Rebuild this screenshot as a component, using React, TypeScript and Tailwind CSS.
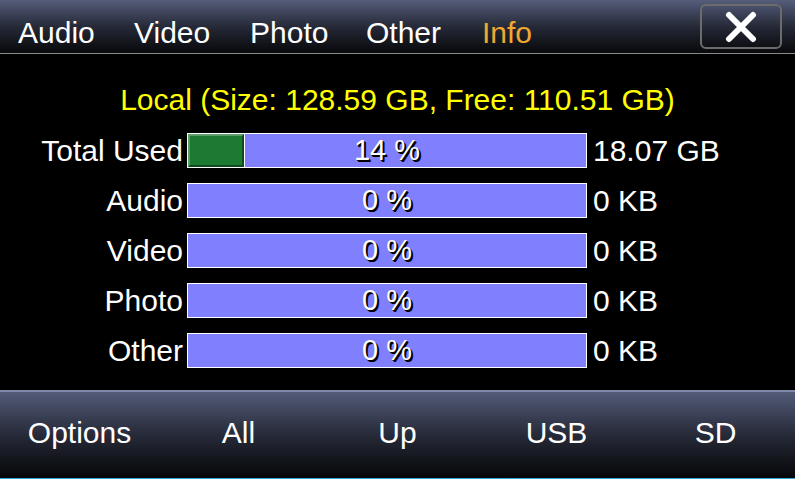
import * as React from 'react';

const tabs = ['Audio', 'Video', 'Photo', 'Other', 'Info'];

const rows = [
    { label: 'Total Used', pct: 14, value: '18.07 GB' },
    { label: 'Audio', pct: 0, value: '0 KB' },
    { label: 'Video', pct: 0, value: '0 KB' },
    { label: 'Photo', pct: 0, value: '0 KB' },
    { label: 'Other', pct: 0, value: '0 KB' },
];

const actions = ['Options', 'All', 'Up', 'USB', 'SD'];

function UsageBar({ pct }: { pct: number }) {
    return (
        <div className="relative flex h-[35px] w-[400px] border border-white bg-[#8080ff]">
            {pct > 0 && (
                <div
                    className="h-full border-2 border-t-[#5d9c6b] border-l-[#5d9c6b] border-b-[#0e4a1b] border-r-[#0e4a1b] bg-[#1d7a32] box-border"
                    style={{ width: `${Math.round((pct / 100) * 398)}px` }}
                />
            )}
            {pct > 0 && <div className="h-full w-px bg-white" />}
            <span className="absolute inset-0 flex items-center justify-center text-[29px] leading-none text-white [text-shadow:1px_1px_0_#000,2px_2px_0_#000]">
                {pct} %
            </span>
        </div>
    );
}

export default function App() {
    return (
        <div className="flex h-[479px] w-[795px] flex-col overflow-hidden bg-black text-[30px] text-white [font-family:'Liberation_Sans',Arial,sans-serif]">
            <div className="flex h-[54px] shrink-0 items-start border-b border-[#8a8a8a] bg-gradient-to-b from-[#555d7b] via-[#262a38] to-[#08090b]">
                <div className="flex pl-[18px] pt-[18px]">
                    {tabs.map((t) => (
                        <span
                            key={t}
                            className={`w-[116px] leading-none ${t === 'Info' ? 'text-[#f0a830]' : 'text-white'}`}
                        >
                            {t}
                        </span>
                    ))}
                </div>
                <button className="ml-auto mr-[13px] mt-[4px] flex h-[45px] w-[82px] items-center justify-center rounded-[6px] border-2 border-[#6b6b6b]">
                    <svg width="32" height="32" viewBox="0 0 32 32">
                        <path d="M4 4 L28 28 M28 4 L4 28" stroke="white" strokeWidth="6" strokeLinecap="round" fill="none" />
                    </svg>
                </button>
            </div>

            <div className="flex flex-1 flex-col pt-[31px]">
                <div className="text-center leading-none text-[#ffff00]">
                    Local (Size: 128.59 GB, Free: 110.51 GB)
                </div>
                <div className="mt-[18px] flex flex-col gap-[15px]">
                    {rows.map((r) => (
                        <div key={r.label} className="flex items-center">
                            <span className="w-[183px] text-right leading-none">{r.label}</span>
                            <div className="ml-[4px]">
                                <UsageBar pct={r.pct} />
                            </div>
                            <span className="ml-[6px] leading-none">{r.value}</span>
                        </div>
                    ))}
                </div>
            </div>

            <div className="flex h-[89px] shrink-0 flex-col border-t-2 border-[#8189ab] bg-gradient-to-b from-[#535b79] via-[#262a38] to-[#060708]">
                <div className="grid flex-1 grid-cols-5 items-center pb-[4px]">
                    {actions.map((a) => (
                        <span key={a} className="text-center leading-none">
                            {a}
                        </span>
                    ))}
                </div>
                <div className="h-px bg-[#33a6d6]" />
            </div>
        </div>
    );
}
